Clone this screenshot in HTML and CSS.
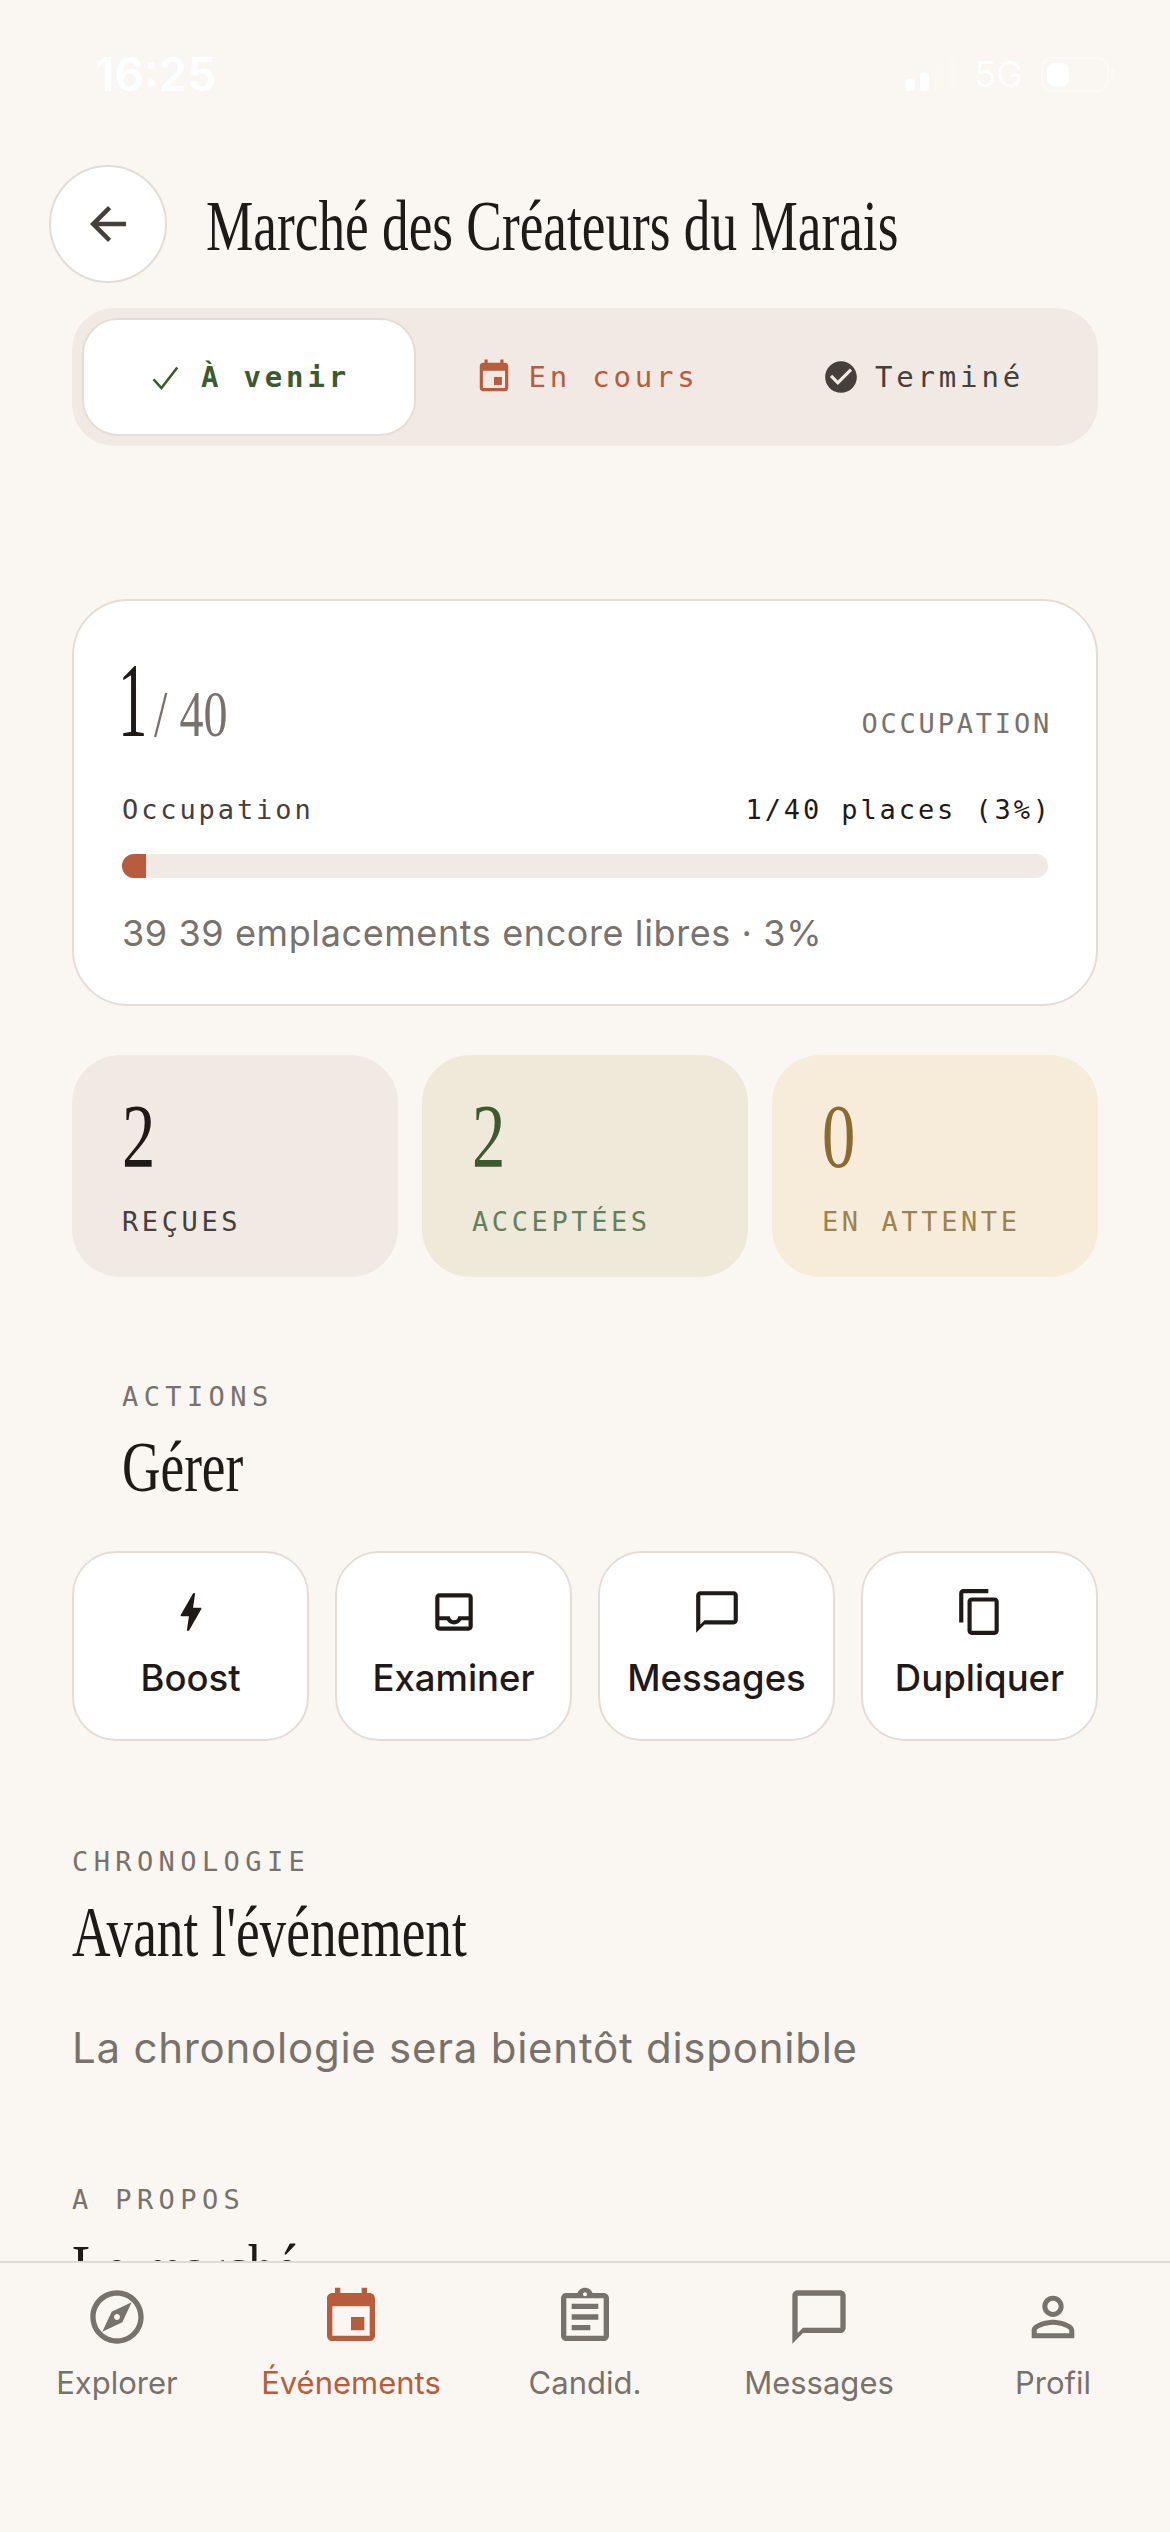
FILE: index.html
```html
<!doctype html>
<html lang="fr">
<head>
    <meta charset="UTF-8">
    <title>Marché des Créateurs du Marais</title>
    <link rel="stylesheet" href="styles.css">
</head>
<body>
<div class="screen">
    <div class="statusbar">
        <span class="clock">16:25</span>
        <div class="status_right">
            <div class="signal">
                <span class="bar bar1"></span>
                <span class="bar bar2"></span>
                <span class="bar bar3"></span>
                <span class="bar bar4"></span>
            </div>
            <span class="network">5G</span>
            <div class="battery"><span class="battery_level"></span></div>
            <span class="battery_nub"></span>
        </div>
    </div>

    <main class="content">
        <header class="topbar">
            <button class="back_btn" aria-label="Retour">
                <svg class="icon_back" viewBox="0 0 24 24"><path d="M20 11H7.83l5.59-5.59L12 4l-8 8 8 8 1.41-1.41L7.83 13H20v-2z"/></svg>
            </button>
            <h1 class="serif page_title"><span class="squeeze">Marché des Créateurs du Marais</span></h1>
        </header>

        <div class="tabs">
            <div class="tab tab_active">
                <svg class="tab_icon" viewBox="0 0 24 24"><path class="thin_check" d="M3.5 13.5l5 5.5 10-13"/></svg>
                <span>À venir</span>
            </div>
            <div class="tab tab_current">
                <svg class="tab_icon" viewBox="0 0 24 24"><path d="M17 12h-5v5h5v-5zM16 1v2H8V1H6v2H5c-1.11 0-1.99.9-1.99 2L3 19c0 1.1.89 2 2 2h14c1.1 0 2-.9 2-2V5c0-1.1-.9-2-2-2h-1V1h-2zm3 18H5V8h14v11z"/></svg>
                <span>En cours</span>
            </div>
            <div class="tab tab_done">
                <svg class="tab_icon" viewBox="0 0 24 24"><path d="M12 2C6.48 2 2 6.48 2 12s4.48 10 10 10 10-4.48 10-10S17.52 2 12 2zm-2 15l-5-5 1.41-1.41L10 14.17l7.59-7.59L19 8l-9 9z"/></svg>
                <span>Terminé</span>
            </div>
        </div>

        <section class="occupancy">
            <div class="occupancy_top">
                <div class="serif occupancy_count">
                    <span class="count_main">1</span>
                    <span class="count_total">/ 40</span>
                </div>
                <span class="mono occupancy_label">OCCUPATION</span>
            </div>
            <div class="mono occupancy_row">
                <span class="row_name">Occupation</span>
                <span class="row_value">1/40 places (3%)</span>
            </div>
            <div class="progress"><div class="progress_fill"></div></div>
            <p class="occupancy_note">39 39 emplacements encore libres · 3%</p>
        </section>

        <div class="stats">
            <div class="stat stat_received">
                <div class="serif stat_number"><span class="squeeze">2</span></div>
                <div class="mono stat_label">REÇUES</div>
            </div>
            <div class="stat stat_accepted">
                <div class="serif stat_number"><span class="squeeze">2</span></div>
                <div class="mono stat_label">ACCEPTÉES</div>
            </div>
            <div class="stat stat_pending">
                <div class="serif stat_number"><span class="squeeze">0</span></div>
                <div class="mono stat_label">EN ATTENTE</div>
            </div>
        </div>

        <div class="section_head section_actions">
            <div class="mono eyebrow">ACTIONS</div>
            <h2 class="serif section_title"><span class="squeeze">Gérer</span></h2>
        </div>

        <div class="actions">
            <div class="action">
                <svg class="action_icon" viewBox="0 0 24 24"><path d="M11 21h-1l1-7H7.5c-.58 0-.57-.32-.38-.66.19-.34.05-.08.07-.12C8.48 10.94 10.42 7.54 13 3h1l-1 7h3.5c.49 0 .56.33.47.51l-.07.15C12.96 17.55 11 21 11 21z"/></svg>
                <span>Boost</span>
            </div>
            <div class="action">
                <svg class="action_icon" viewBox="0 0 24 24"><path d="M19 3H5c-1.1 0-2 .9-2 2v14c0 1.1.9 2 2 2h14c1.1 0 2-.9 2-2V5c0-1.1-.9-2-2-2zm0 16H5v-3h3.56c.69 1.19 1.97 2 3.45 2s2.75-.81 3.45-2H19v3zm0-5h-4.99c0 1.1-.9 2-2 2s-2-.9-2-2H5V5h14v9z"/></svg>
                <span>Examiner</span>
            </div>
            <div class="action">
                <svg class="action_icon" viewBox="0 0 24 24"><path d="M20 2H4c-1.1 0-2 .9-2 2v18l4-4h14c1.1 0 2-.9 2-2V4c0-1.1-.9-2-2-2zm0 14H6l-2 2V4h16v12z"/></svg>
                <span>Messages</span>
            </div>
            <div class="action">
                <svg class="action_icon" viewBox="0 0 24 24"><path d="M16 1H4c-1.1 0-2 .9-2 2v14h2V3h12V1zm3 4H8c-1.1 0-2 .9-2 2v14c0 1.1.9 2 2 2h11c1.1 0 2-.9 2-2V7c0-1.1-.9-2-2-2zm0 16H8V7h11v14z"/></svg>
                <span>Dupliquer</span>
            </div>
        </div>

        <div class="section_head section_timeline">
            <div class="mono eyebrow">CHRONOLOGIE</div>
            <h2 class="serif section_title"><span class="squeeze">Avant l'événement</span></h2>
        </div>
        <p class="timeline_empty">La chronologie sera bientôt disponible</p>

        <div class="section_head section_about">
            <div class="mono eyebrow">A PROPOS</div>
            <h2 class="serif section_title"><span class="squeeze">Le marché</span></h2>
        </div>
    </main>

    <nav class="tabbar">
        <div class="nav_item">
            <svg class="nav_icon" viewBox="0 0 24 24"><path d="M12 2C6.48 2 2 6.48 2 12s4.48 10 10 10 10-4.48 10-10S17.52 2 12 2zm0 18c-4.41 0-8-3.59-8-8s3.59-8 8-8 8 3.59 8 8-3.59 8-8 8zm-5.5-2.5l7.51-3.49L17.5 6.5 9.99 9.99 6.5 17.5zm5.5-6.6c.61 0 1.1.49 1.1 1.1s-.49 1.1-1.1 1.1-1.1-.49-1.1-1.1.49-1.1 1.1-1.1z"/></svg>
            <span>Explorer</span>
        </div>
        <div class="nav_item nav_active">
            <svg class="nav_icon" viewBox="0 0 24 24"><path d="M17 12h-5v5h5v-5zM16 1v2H8V1H6v2H5c-1.11 0-1.99.9-1.99 2L3 19c0 1.1.89 2 2 2h14c1.1 0 2-.9 2-2V5c0-1.1-.9-2-2-2h-1V1h-2zm3 18H5V8h14v11z"/></svg>
            <span>Événements</span>
        </div>
        <div class="nav_item">
            <svg class="nav_icon" viewBox="0 0 24 24"><path d="M7 15h7v2H7zm0-4h10v2H7zm0-4h10v2H7zm12-4h-4.18C14.4 1.84 13.3 1 12 1c-1.3 0-2.4.84-2.82 2H5c-.14 0-.27.01-.4.04-.39.08-.74.28-1.01.55-.18.18-.33.4-.43.64-.1.23-.16.49-.16.77v14c0 .27.06.54.16.78s.25.45.43.64c.27.27.62.47 1.01.55.13.02.26.03.4.03h14c1.1 0 2-.9 2-2V5c0-1.1-.9-2-2-2zm-7-.25c.41 0 .75.34.75.75s-.34.75-.75.75-.75-.34-.75-.75.34-.75.75-.75zM19 19H5V5h14v14z"/></svg>
            <span>Candid.</span>
        </div>
        <div class="nav_item">
            <svg class="nav_icon" viewBox="0 0 24 24"><path d="M20 2H4c-1.1 0-2 .9-2 2v18l4-4h14c1.1 0 2-.9 2-2V4c0-1.1-.9-2-2-2zm0 14H6l-2 2V4h16v12z"/></svg>
            <span>Messages</span>
        </div>
        <div class="nav_item">
            <svg class="nav_icon" viewBox="0 0 24 24"><path d="M12 5.9c1.16 0 2.1.94 2.1 2.1s-.94 2.1-2.1 2.1S9.9 9.16 9.9 8s.94-2.1 2.1-2.1m0 9c2.97 0 6.1 1.46 6.1 2.1v1.1H5.9V17c0-.64 3.13-2.1 6.1-2.1M12 4C9.79 4 8 5.79 8 8s1.79 4 4 4 4-1.79 4-4-1.79-4-4-4zm0 9c-2.67 0-8 1.34-8 4v3h16v-3c0-2.66-5.33-4-8-4z"/></svg>
            <span>Profil</span>
        </div>
    </nav>
</div>
</body>
</html>
```

FILE: styles.css
```css
* {
    box-sizing: border-box;
}
body {
    margin: 0;
    background: #FAF7F2;
    font-family: Inter, "Noto Sans", sans-serif;
    color: #1F1A17;
}
svg {
    display: block;
    fill: currentColor;
}
h1, h2, p {
    margin: 0;
    font-weight: normal;
}
.screen {
    display: flex;
    flex-direction: column;
    width: 1170px;
    height: 2532px;
    overflow: hidden;
}
.serif {
    font-family: "Liberation Serif", serif;
    white-space: nowrap;
}
/* the display face is narrower than anything installed */
.squeeze {
    display: inline-block;
    transform: scaleX(0.74);
    transform-origin: left center;
}
.mono {
    font-family: "DejaVu Sans Mono", monospace;
}

/* status bar */
.statusbar {
    display: flex;
    flex: none;
    justify-content: space-between;
    align-items: center;
    height: 148px;
    padding: 0 55px 0 95px;
    color: #FFFFFF;
}
.clock {
    font-size: 46px;
    font-weight: 600;
}
.status_right {
    display: flex;
    align-items: center;
}
.signal {
    display: flex;
    align-items: flex-end;
    gap: 5px;
    height: 33px;
    margin-right: 17px;
}
.bar {
    width: 9px;
    border-radius: 3px;
    background: #FFFFFF;
}
.bar1 { height: 12px; }
.bar2 { height: 18px; }
.bar3 { height: 26px; opacity: 0.12; }
.bar4 { height: 33px; opacity: 0.12; }
.network {
    margin-right: 18px;
    font-size: 36px;
}
.battery {
    width: 68px;
    height: 35px;
    padding: 4px;
    border: 2px solid rgba(255, 255, 255, 0.4);
    border-radius: 11px;
}
.battery_level {
    display: block;
    width: 22px;
    height: 100%;
    border-radius: 7px;
    background: #FFFFFF;
}
.battery_nub {
    width: 4px;
    height: 12px;
    margin-left: 2px;
    border-radius: 0 3px 3px 0;
    background: rgba(255, 255, 255, 0.4);
}

/* scrolling part */
.content {
    flex: 1;
    min-height: 0;
    overflow: hidden;
}
.topbar {
    display: flex;
    align-items: center;
    gap: 39px;
    margin: 17px 0 25px 49px;
}
.back_btn {
    display: flex;
    flex: none;
    justify-content: center;
    align-items: center;
    width: 118px;
    height: 118px;
    padding: 0;
    border: 2px solid #E5DDD5;
    border-radius: 50%;
    background: #FFFFFF;
    color: #45403B;
}
.icon_back {
    width: 54px;
    height: 54px;
}
.page_title {
    margin-top: 4px;
    font-size: 72px;
    line-height: 84px;
}

.tabs {
    display: flex;
    height: 138px;
    margin: 0 72px;
    padding: 10px;
    border-radius: 42px;
    background: #F1EAE4;
}
.tab {
    display: flex;
    flex: 1;
    justify-content: center;
    align-items: center;
    gap: 15px;
    border-radius: 36px;
    font-family: "DejaVu Sans Mono", monospace;
    font-size: 29px;
    letter-spacing: 3.8px;
}
.tab_icon {
    flex: none;
    width: 38px;
    height: 38px;
}
.thin_check {
    fill: none;
    stroke: currentColor;
    stroke-width: 1.6;
}
.tab_active {
    flex: 0 0 334px;
    border: 2px solid #E5DDD5;
    background: #FFFFFF;
    color: #3D5A2E;
    font-weight: bold;
}
.tab_current {
    padding-left: 6px;
    color: #B85C3E;
}
.tab_done {
    padding-left: 6px;
    color: #45403B;
}

/* occupation card */
.occupancy {
    height: 407px;
    margin: 153px 72px 0;
    padding: 46px 48px 0;
    border: 2px solid #E5DDD5;
    border-radius: 56px;
    background: #FFFFFF;
}
.occupancy_top {
    display: flex;
    justify-content: space-between;
    align-items: flex-end;
    height: 100px;
}
.occupancy_count {
    display: flex;
    align-items: baseline;
    margin-bottom: -17px;
    margin-left: -4px;
    line-height: 100px;
}
.count_main {
    display: block;
    width: 36px;
    font-size: 105px;
    transform: scaleX(0.56);
    transform-origin: left center;
}
.count_total {
    display: block;
    color: #78726C;
    font-size: 65px;
    transform: scaleX(0.74);
    transform-origin: left center;
}
.occupancy_label {
    margin-right: -4px;
    margin-bottom: 8px;
    color: #78726C;
    font-size: 27px;
    letter-spacing: 2.8px;
}
.occupancy_row {
    display: flex;
    justify-content: space-between;
    margin-top: 47px;
    margin-right: -4px;
    font-size: 27px;
    line-height: 32px;
    letter-spacing: 2.9px;
}
.row_name {
    color: #45403B;
}
.progress {
    height: 24px;
    margin-top: 28px;
    overflow: hidden;
    border-radius: 12px;
    background: #F1EAE4;
}
.progress_fill {
    width: 24px;
    height: 100%;
    background: #B85C3E;
}
.occupancy_note {
    margin-top: 33px;
    color: #78726C;
    font-size: 36px;
    line-height: 44px;
    letter-spacing: 0.6px;
}

/* counters */
.stats {
    display: grid;
    grid-template-columns: repeat(3, 1fr);
    gap: 24px;
    margin: 49px 72px 0;
}
.stat {
    height: 222px;
    padding: 30px 50px 0;
    border-radius: 48px;
}
.stat_number {
    font-size: 90px;
    line-height: 104px;
}
.stat_label {
    margin-top: 17px;
    font-size: 27px;
    line-height: 32px;
    letter-spacing: 3.6px;
}
.stat_received { background: #F1EAE4; }
.stat_received .stat_label { color: #45403B; }
.stat_accepted { background: #EFE9D9; color: #3D5A2E; }
.stat_accepted .stat_label { color: #64805A; }
.stat_pending { background: #F6ECD9; color: #8A6A2E; }
.stat_pending .stat_label { color: #9C8250; }

/* section headings */
.eyebrow {
    color: #78726C;
    font-size: 27px;
    line-height: 32px;
    letter-spacing: 5.4px;
}
.section_title {
    margin-top: 18px;
    font-size: 72px;
    line-height: 72px;
}
.section_actions {
    margin: 104px 72px 0 122px;
}
.section_timeline {
    margin: 105px 72px 0;
}
.section_about {
    margin: 110px 72px 0;
}

.actions {
    display: grid;
    grid-template-columns: repeat(4, 1fr);
    gap: 26px;
    margin: 48px 72px 0;
}
.action {
    display: flex;
    flex-direction: column;
    align-items: center;
    height: 190px;
    padding-top: 34px;
    border: 2px solid #E5DDD5;
    border-radius: 44px;
    background: #FFFFFF;
    font-size: 36.5px;
    font-weight: 500;
}
.action_icon {
    width: 50px;
    height: 50px;
    margin-bottom: 19px;
}

.timeline_empty {
    margin: 54px 72px 0;
    color: #78726C;
    font-size: 42px;
    line-height: 52px;
    letter-spacing: 0.75px;
}

/* bottom navigation */
.tabbar {
    display: grid;
    flex: none;
    grid-template-columns: repeat(5, 1fr);
    height: 271px;
    padding-top: 22px;
    border-top: 2px solid #DEDAD5;
    background: #FAF7F2;
}
.nav_item {
    display: flex;
    flex-direction: column;
    align-items: center;
    color: #78726C;
    font-size: 31px;
    line-height: 40px;
}
.nav_icon {
    width: 64px;
    height: 64px;
    margin-bottom: 14px;
}
.nav_active {
    color: #B85C3E;
}
```
